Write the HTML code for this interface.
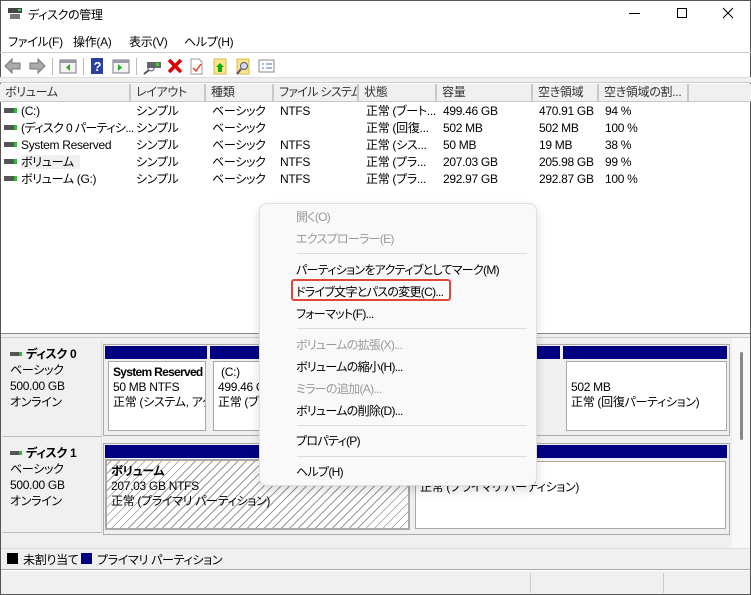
<!DOCTYPE html>
<html><head><meta charset="utf-8"><style>
*{margin:0;padding:0;box-sizing:border-box}
body{width:751px;height:595px;overflow:hidden;background:#fff;font-family:"Liberation Sans","Noto Sans CJK JP",sans-serif;font-size:12px;color:#000;position:relative;font-feature-settings:"palt";letter-spacing:-0.3px}
.a{position:absolute;white-space:nowrap}
.hd{position:absolute;top:84px;height:18px;background:#f0f0f0;border-right:2px solid #c8c8c8;border-bottom:1px solid #c8c8c8;padding-left:5px;line-height:17px;color:#333;white-space:nowrap;overflow:hidden}
.r{position:absolute;height:17px;line-height:17px;white-space:nowrap}
.di{display:inline-block;width:13px;height:5px;background:#555;border-right:3px solid #3b3;vertical-align:middle;margin-right:4px;position:relative;top:-1px}
.bar{position:absolute;height:13px;background:#000080}
.cell{position:absolute;background:#fff;border:1px solid #a8a8a8;padding:3px 4px;line-height:15px;white-space:nowrap;overflow:hidden}
.m{position:absolute;left:296px;color:#000;white-space:nowrap;letter-spacing:-0.7px}
.g{color:#9a9a9a}
.sep{position:absolute;left:297px;width:230px;height:1px;background:#dcdcdc}
</style></head><body>
<div style="position:absolute;left:0;top:0;width:751px;height:595px;border:1px solid #555"></div>
<svg class="a" style="left:7px;top:7px" width="16" height="14"><rect x="1" y="1" width="14" height="5" fill="#444"/><rect x="3" y="7" width="10" height="5" fill="#777"/><rect x="11" y="2" width="3" height="2" fill="#4c4"/></svg>
<div class="a" style="left:28px;top:6px;font-size:12px">ディスクの管理</div>
<div class="a" style="left:629px;top:13px;width:11px;height:1px;background:#000"></div>
<div class="a" style="left:677px;top:8px;width:10px;height:10px;border:1px solid #000"></div>
<svg class="a" style="left:722px;top:7px" width="12" height="12"><path d="M1 1L11 11M11 1L1 11" stroke="#000" stroke-width="1"/></svg>
<div class="a" style="left:8px;top:33px">ファイル(F)</div>
<div class="a" style="left:73px;top:33px">操作(A)</div>
<div class="a" style="left:129px;top:33px">表示(V)</div>
<div class="a" style="left:184px;top:33px">ヘルプ(H)</div>
<div class="a" style="left:0;top:52px;width:751px;height:1px;background:#ccc"></div>
<svg class="a" style="left:3px;top:56px" width="280" height="20">
<path d="M2 10L9 3V7H17V13H9V17Z" fill="#aaa" stroke="#777"/>
<path d="M42 10L35 3V7H27V13H35V17Z" fill="#aaa" stroke="#777"/>
<rect x="49" y="2" width="1" height="17" fill="#bbb"/>
<rect x="57" y="4" width="16" height="13" fill="#f4f4f4" stroke="#778"/><rect x="57" y="4" width="16" height="3" fill="#99a"/><path d="M67 8V15L63 11.5Z" fill="#2a2"/>
<rect x="80" y="2" width="1" height="17" fill="#bbb"/>
<rect x="88" y="2" width="12" height="16" fill="#2a3fa0"/><text x="90.5" y="15" fill="#fff" font-size="13" font-weight="bold" font-family="Liberation Sans">?</text>
<rect x="110" y="4" width="16" height="13" fill="#f4f4f4" stroke="#778"/><rect x="110" y="4" width="16" height="3" fill="#99a"/><path d="M115 8V15L119 11.5Z" fill="#2a2"/>
<rect x="133" y="2" width="1" height="17" fill="#bbb"/>
<rect x="144" y="6" width="14" height="6" fill="#666"/><rect x="153" y="7" width="3" height="3" fill="#4c4"/><circle cx="148" cy="12" r="3" fill="none" stroke="#558"/><path d="M146 14L141 18" stroke="#555" stroke-width="2"/>
<path d="M166 4L178 16M178 4L166 16" stroke="#d00" stroke-width="3.5"/>
<path d="M188 3H196L199 6V18H188Z" fill="#fff" stroke="#999"/><path d="M190 12L193 15L198 8" stroke="#e04020" fill="none" stroke-width="1.5"/>
<rect x="211" y="3" width="12" height="15" fill="#fbe58c" stroke="#d9b84a"/><path d="M217 7L221 11H219V16H215V11H213Z" fill="#1a1"/>
<rect x="234" y="3" width="12" height="15" fill="#fbe58c" stroke="#d9b84a"/><circle cx="241" cy="10" r="3.5" fill="#cde" stroke="#557"/><path d="M238 13L234 18" stroke="#557" stroke-width="2"/>
<rect x="256" y="4" width="15" height="12" fill="#fff" stroke="#888"/><path d="M259 8H261M263 8H269M259 12H261M263 12H269" stroke="#47a"/>
</svg>
<div class="a" style="left:0;top:77px;width:751px;height:6px;background:#f0f0f0;border-top:1px solid #ddd;border-bottom:1px solid #ccc"></div>
<div class="hd" style="left:0;width:131px">ボリューム</div>
<div class="hd" style="left:131px;width:75px">レイアウト</div>
<div class="hd" style="left:206px;width:68px">種類</div>
<div class="hd" style="left:274px;width:85px;letter-spacing:-0.7px">ファイル システム</div>
<div class="hd" style="left:359px;width:78px">状態</div>
<div class="hd" style="left:437px;width:96px">容量</div>
<div class="hd" style="left:533px;width:66px">空き領域</div>
<div class="hd" style="left:599px;width:90px">空き領域の割...</div>
<div class="hd" style="left:689px;width:62px;border-right:none"></div>
<div class="r" style="left:4px;top:103px"><span class="di"></span>(C:)</div>
<div class="r" style="left:4px;top:120px;letter-spacing:-0.6px"><span class="di"></span>(ディスク 0 パーティシ...</div>
<div class="r" style="left:4px;top:137px"><span class="di"></span>System Reserved</div>
<div class="r" style="left:4px;top:154px"><span class="di"></span><span style="background:#f0f0f0;padding-right:6px">ボリューム</span></div>
<div class="r" style="left:4px;top:171px"><span class="di"></span>ボリューム (G:)</div>
<div class="r" style="left:136px;top:103px">シンプル</div><div class="r" style="left:136px;top:120px">シンプル</div><div class="r" style="left:136px;top:137px">シンプル</div><div class="r" style="left:136px;top:154px">シンプル</div><div class="r" style="left:136px;top:171px">シンプル</div>
<div class="r" style="left:212px;top:103px">ベーシック</div><div class="r" style="left:212px;top:120px">ベーシック</div><div class="r" style="left:212px;top:137px">ベーシック</div><div class="r" style="left:212px;top:154px">ベーシック</div><div class="r" style="left:212px;top:171px">ベーシック</div>
<div class="r" style="left:280px;top:103px">NTFS</div><div class="r" style="left:280px;top:137px">NTFS</div><div class="r" style="left:280px;top:154px">NTFS</div><div class="r" style="left:280px;top:171px">NTFS</div>
<div class="r" style="left:366px;top:103px">正常 (ブート...</div><div class="r" style="left:366px;top:120px">正常 (回復...</div><div class="r" style="left:366px;top:137px">正常 (シス...</div><div class="r" style="left:366px;top:154px">正常 (プラ...</div><div class="r" style="left:366px;top:171px">正常 (プラ...</div>
<div class="r" style="left:443px;top:103px">499.46 GB</div><div class="r" style="left:443px;top:120px">502 MB</div><div class="r" style="left:443px;top:137px">50 MB</div><div class="r" style="left:443px;top:154px">207.03 GB</div><div class="r" style="left:443px;top:171px">292.97 GB</div>
<div class="r" style="left:539px;top:103px">470.91 GB</div><div class="r" style="left:539px;top:120px">502 MB</div><div class="r" style="left:539px;top:137px">19 MB</div><div class="r" style="left:539px;top:154px">205.98 GB</div><div class="r" style="left:539px;top:171px">292.87 GB</div>
<div class="r" style="left:605px;top:103px">94 %</div><div class="r" style="left:605px;top:120px">100 %</div><div class="r" style="left:605px;top:137px">38 %</div><div class="r" style="left:605px;top:154px">99 %</div><div class="r" style="left:605px;top:171px">100 %</div>
<div class="a" style="left:1px;top:333px;width:749px;height:5px;background:#f0f0f0;border-top:1px solid #888;border-bottom:1px solid #ccc"></div>
<div class="a" style="left:1px;top:338px;width:731px;height:210px;background:#f0f0f0"></div>
<div class="a" style="left:732px;top:338px;width:18px;height:210px;background:#f8f8f8"></div>
<div class="a" style="left:740px;top:352px;width:3px;height:88px;background:#888;border-radius:2px"></div>
<div class="a" style="left:2px;top:341px;width:100px;height:96px;background:#f0f0f0;border-right:1px solid #ddd;border-bottom:1px solid #bbb"></div>
<div class="a" style="left:10px;top:346px;line-height:16px"><span class="di" style="width:12px;height:4px"></span><b>ディスク 0</b><br>ベーシック<br>500.00 GB<br>オンライン</div>
<div class="a" style="left:103px;top:344px;width:627px;height:92px;border:1px solid #aaa;background:#f0f0f0"></div>
<div class="bar" style="left:105px;top:346px;width:102px"></div>
<div class="bar" style="left:210px;top:346px;width:350px"></div>
<div class="bar" style="left:563px;top:346px;width:164px"></div>
<div class="cell" style="left:108px;top:361px;width:98px;height:70px"><b style="letter-spacing:-0.7px">System Reserved</b><br>50 MB NTFS<br>正常 (システム, アク</div>
<div class="cell" style="left:213px;top:361px;width:160px;height:70px">&nbsp;(C:)<br>499.46 GB<br>正常 (ブー</div>
<div class="cell" style="left:566px;top:361px;width:161px;height:70px;padding-top:18px">502 MB<br>正常 (回復パーティション)</div>
<div class="a" style="left:2px;top:439px;width:100px;height:94px;background:#f0f0f0;border-right:1px solid #ddd;border-bottom:1px solid #bbb"></div>
<div class="a" style="left:10px;top:445px;line-height:16px"><span class="di" style="width:12px;height:4px"></span><b>ディスク 1</b><br>ベーシック<br>500.00 GB<br>オンライン</div>
<div class="a" style="left:103px;top:443px;width:627px;height:92px;border:1px solid #aaa;background:#f0f0f0"></div>
<div class="bar" style="left:105px;top:445px;width:622px"></div>
<div class="cell" style="left:105px;top:459px;width:305px;height:71px;border:2px solid #a8a8a8;background:repeating-linear-gradient(-45deg,#fff 0,#fff 5px,#999 5px,#999 6px)"><b>ボリューム</b><br>207.03 GB NTFS<br>正常 (プライマリ パーティション)</div>
<div class="cell" style="left:415px;top:461px;width:311px;height:68px">292.97 GB NTFS<br>正常 (プライマリ パーティション)</div>
<div class="a" style="left:1px;top:548px;width:749px;height:22px;background:#f0f0f0;border-top:1px solid #ddd;border-bottom:1px solid #aaa"></div>
<div class="a" style="left:7px;top:553px;width:11px;height:11px;background:#000"></div>
<div class="a" style="left:23px;top:551px">未割り当て</div>
<div class="a" style="left:81px;top:553px;width:11px;height:11px;background:#000080"></div>
<div class="a" style="left:97px;top:551px">プライマリ パーティション</div>
<div class="a" style="left:1px;top:571px;width:749px;height:23px;background:#f0f0f0"></div>
<div class="a" style="left:530px;top:573px;width:1px;height:20px;background:#ccc"></div>
<div class="a" style="left:663px;top:573px;width:1px;height:20px;background:#ccc"></div>
<div class="a" style="left:259px;top:203px;width:278px;height:283px;background:#f9f9f9;border:1px solid #e0e0e0;border-radius:8px;box-shadow:0 4px 10px rgba(0,0,0,0.15)"></div>
<div class="m g" style="top:208px">開く(O)</div>
<div class="m g" style="top:230px">エクスプローラー(E)</div>
<div class="sep" style="top:253px"></div>
<div class="m" style="top:261px">パーティションをアクティブとしてマーク(M)</div>
<div class="a" style="left:291px;top:279px;width:160px;height:22px;border:2px solid #e0473c;border-radius:3px"></div>
<div class="m" style="top:283px">ドライブ文字とパスの変更(C)...</div>
<div class="m" style="top:305px">フォーマット(F)...</div>
<div class="sep" style="top:328px"></div>
<div class="m g" style="top:336px">ボリュームの拡張(X)...</div>
<div class="m" style="top:358px">ボリュームの縮小(H)...</div>
<div class="m g" style="top:380px">ミラーの追加(A)...</div>
<div class="m" style="top:402px">ボリュームの削除(D)...</div>
<div class="sep" style="top:425px"></div>
<div class="m" style="top:432px">プロパティ(P)</div>
<div class="sep" style="top:456px"></div>
<div class="m" style="top:463px">ヘルプ(H)</div>
</body></html>
